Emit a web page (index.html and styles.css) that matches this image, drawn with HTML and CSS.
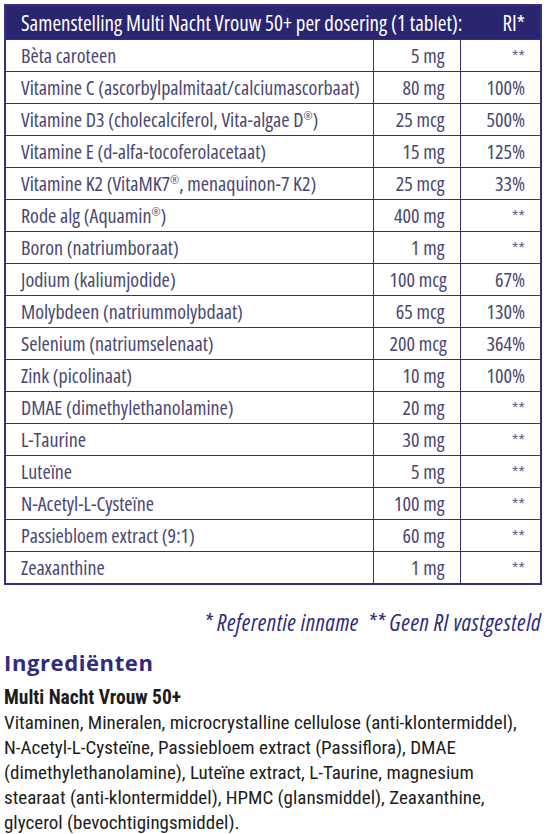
FILE: index.html
```html
<!DOCTYPE html>
<html lang="nl">
<head>
    <meta charset="UTF-8">
    <meta name="viewport" content="width=device-width, initial-scale=1.0">
    <title>Multi Nacht Vrouw 50+</title>
    <link rel="stylesheet" href="styles.css">
</head>
<body>
    <table class="nutrition">
        <colgroup>
            <col>
            <col class="col-amount">
            <col class="col-ri">
        </colgroup>
        <thead>
            <tr>
                <th colspan="2" class="title">Samenstelling Multi Nacht Vrouw 50+ per dosering (1 tablet):</th>
                <th class="ri">RI*</th>
            </tr>
        </thead>
        <tbody>
            <tr><td>Bèta caroteen</td><td class="amount">5 mg</td><td class="ri stars">**</td></tr>
            <tr><td>Vitamine C (ascorbylpalmitaat/calciumascorbaat)</td><td class="amount">80 mg</td><td class="ri">100%</td></tr>
            <tr><td>Vitamine D3 (cholecalciferol, Vita-algae D<sup>®</sup>)</td><td class="amount">25 mcg</td><td class="ri">500%</td></tr>
            <tr><td>Vitamine E (d-alfa-tocoferolacetaat)</td><td class="amount">15 mg</td><td class="ri">125%</td></tr>
            <tr><td>Vitamine K2 (VitaMK7<sup>®</sup>, menaquinon-7 K2)</td><td class="amount">25 mcg</td><td class="ri">33%</td></tr>
            <tr><td>Rode alg (Aquamin<sup>®</sup>)</td><td class="amount">400 mg</td><td class="ri stars">**</td></tr>
            <tr><td>Boron (natriumboraat)</td><td class="amount">1 mg</td><td class="ri stars">**</td></tr>
            <tr><td>Jodium (kaliumjodide)</td><td class="amount">100 mcg</td><td class="ri">67%</td></tr>
            <tr><td>Molybdeen (natriummolybdaat)</td><td class="amount">65 mcg</td><td class="ri">130%</td></tr>
            <tr><td>Selenium (natriumselenaat)</td><td class="amount">200 mcg</td><td class="ri">364%</td></tr>
            <tr><td>Zink (picolinaat)</td><td class="amount">10 mg</td><td class="ri">100%</td></tr>
            <tr><td>DMAE (dimethylethanolamine)</td><td class="amount">20 mg</td><td class="ri stars">**</td></tr>
            <tr><td>L-Taurine</td><td class="amount">30 mg</td><td class="ri stars">**</td></tr>
            <tr><td>Luteïne</td><td class="amount">5 mg</td><td class="ri stars">**</td></tr>
            <tr><td>N-Acetyl-L-Cysteïne</td><td class="amount">100 mg</td><td class="ri stars">**</td></tr>
            <tr><td>Passiebloem extract (9:1)</td><td class="amount">60 mg</td><td class="ri stars">**</td></tr>
            <tr><td>Zeaxanthine</td><td class="amount">1 mg</td><td class="ri stars">**</td></tr>
        </tbody>
    </table>

    <p class="footnote">* Referentie inname &nbsp;** Geen RI vastgesteld</p>

    <h2 class="heading">Ingrediënten</h2>
    <p class="product">Multi Nacht Vrouw 50+</p>
    <p class="ingredients">Vitaminen, Mineralen, microcrystalline cellulose (anti-klontermiddel), N-Acetyl-L-Cysteïne, Passiebloem extract (Passiflora), DMAE (dimethylethanolamine), Luteïne extract, L-Taurine, magnesium stearaat (anti-klontermiddel), HPMC (glansmiddel), Zeaxanthine, glycerol (bevochtigingsmiddel).</p>
</body>
</html>
```

FILE: styles.css
```css
body {
    margin: 0;
    background: #ffffff;
    font-family: "Open Sans", sans-serif;
    color: #1c1c1c;
}

.nutrition {
    margin: 4px 0 0 4px;
    width: 538px;
    table-layout: fixed;
    border-collapse: collapse;
    border: 2px solid #34307c;
    font-stretch: 75%;
    font-size: 20px;
    color: #4a4772;
}

.col-amount {
    width: 86px;
}

.col-ri {
    width: 81px;
}

.nutrition th {
    background-color: #2a2570;
    color: #ffffff;
    font-weight: 500;
    font-size: 21px;
    height: 33px;
    padding: 0 15px;
    text-align: left;
    white-space: nowrap;
}

.nutrition th.ri {
    text-align: right;
}

.nutrition td {
    height: 31px;
    padding: 0 15px;
    border: 1px solid #34307c;
    white-space: nowrap;
}

.nutrition td.amount,
.nutrition td.ri {
    text-align: right;
}

.nutrition td.stars {
    font-size: 17px;
    color: #6d6b92;
}

sup {
    font-size: 11px;
    vertical-align: 7px;
    line-height: 0;
}

.footnote {
    margin: 21px 9px 0 0;
    text-align: right;
    font-style: italic;
    font-stretch: 85%;
    font-size: 23px;
    letter-spacing: 0.5px;
    color: #2f2b7a;
}

.heading {
    margin: 9px 0 0 4px;
    font-weight: 700;
    font-size: 22px;
    letter-spacing: 0.6px;
    color: #2f2b80;
}

.product {
    margin: 9px 0 0 4px;
    font-family: Roboto, sans-serif;
    font-stretch: 75%;
    font-weight: 700;
    font-size: 19.5px;
}

.ingredients {
    margin: 1px 0 0 4px;
    width: 528px;
    font-family: Roboto, sans-serif;
    font-stretch: 75%;
    font-size: 19px;
    line-height: 25px;
}
```
